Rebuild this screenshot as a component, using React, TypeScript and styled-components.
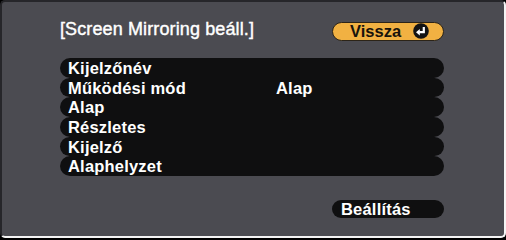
import React from "react";
import styled, { createGlobalStyle } from "styled-components";

const Global = createGlobalStyle`
  html, body { margin: 0; padding: 0; background: #000; }
  #root { width: 506px; height: 240px; }
`;

const Panel = styled.div`
  box-sizing: border-box;
  width: 506px;
  height: 238px;
  background: #4b4b51;
  border-top: 2px solid #26262a;
  border-left: 2px solid #26262a;
  border-right: 2px solid #f4f4f4;
  border-bottom: 2px solid #f4f4f4;
  border-radius: 5px;
  padding: 16px 60px 0 58px;
  display: flex;
  flex-direction: column;
  font-family: "Liberation Sans", Arial, sans-serif;
  color: #fff;
`;

const Header = styled.div`
  display: flex;
  align-items: center;
  justify-content: space-between;
  height: 22px;
`;

const Title = styled.div`
  font-size: 18px;
  line-height: 22px;
  letter-spacing: 0.12px;
  -webkit-text-stroke: 0.4px #fff;
`;

const BackButton = styled.div`
  box-sizing: border-box;
  width: 112px;
  height: 19px;
  margin-top: 4px;
  background: #f1b142;
  border: 1px solid #2c2418;
  border-radius: 10px;
  display: flex;
  align-items: center;
  padding-left: 17px;
  gap: 12px;
  color: #17130c;
  font-weight: bold;
  font-size: 16.5px;
`;

const List = styled.div`
  margin-top: 18px;
  display: flex;
  flex-direction: column;
`;

const Row = styled.div`
  height: 19.7px;
  background: #0f0f10;
  border-radius: 10px;
  display: grid;
  grid-template-columns: 208px 1fr;
  align-items: center;
  padding-left: 8px;
  font-weight: bold;
  font-size: 16.5px;
  line-height: 18px;
  letter-spacing: 0.2px;
`;

const Footer = styled.div`
  display: flex;
  justify-content: flex-end;
  margin-top: 24px;
`;

const SetButton = styled.div`
  width: 112px;
  height: 18px;
  background: #0f0f10;
  border-radius: 9px;
  box-sizing: border-box;
  padding-left: 9px;
  font-weight: bold;
  font-size: 16.5px;
  line-height: 18px;
  letter-spacing: 0.2px;
  color: #fff;
`;

const EnterIcon = () => (
  <svg width="16" height="16" viewBox="0 0 16 16">
    <circle cx="8" cy="8" r="7.8" fill="#141414" />
    <path d="M10.8 4 V9.2 H6.2" stroke="#fff" strokeWidth="2.2" fill="none" />
    <path d="M3 9.2 L6.8 6 V12.4 Z" fill="#fff" />
  </svg>
);

const rows: [string, string][] = [
  ["Kijelzőnév", ""],
  ["Működési mód", "Alap"],
  ["Alap", ""],
  ["Részletes", ""],
  ["Kijelző", ""],
  ["Alaphelyzet", ""],
];

export default function App() {
  return (
    <>
      <Global />
      <Panel>
        <Header>
          <Title>[Screen Mirroring beáll.]</Title>
          <BackButton>
            <span>Vissza</span>
            <EnterIcon />
          </BackButton>
        </Header>
        <List>
          {rows.map(([label, value]) => (
            <Row key={label}>
              <span>{label}</span>
              <span>{value}</span>
            </Row>
          ))}
        </List>
        <Footer>
          <SetButton>Beállítás</SetButton>
        </Footer>
      </Panel>
    </>
  );
}
